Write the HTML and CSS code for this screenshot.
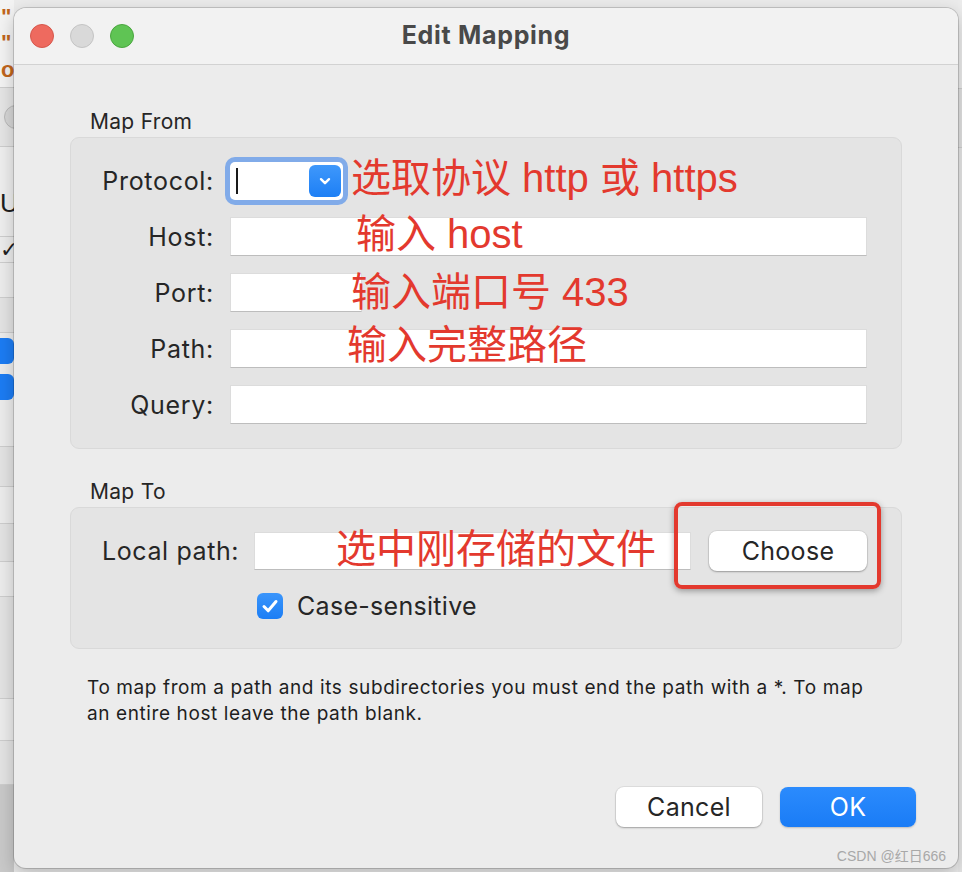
FILE: index.html
```html
<!DOCTYPE html>
<html lang="zh-CN">
<head>
<meta charset="utf-8">
<title>Edit Mapping</title>
<link rel="stylesheet" href="styles.css">
</head>
<body>
<div class="desktop">
  <div class="behind">
    <div class="b-row b-top">
      <span class="b-quote">"</span>
      <span class="b-quote">"</span>
      <span class="b-o">o</span>
    </div>
    <div class="b-row b-tool"><span class="b-circle"></span></div>
    <div class="b-row b-head"><span class="b-us">Us</span></div>
    <div class="b-row b-tick"><span class="b-check">✓</span></div>
    <div class="b-row b-h35"></div>
    <div class="b-row b-h35 alt"></div>
    <div class="b-row b-boxes"><span class="b-cb"></span><span class="b-cb"></span></div>
    <div class="b-row b-h40 alt"></div>
    <div class="b-row b-h37"></div>
    <div class="b-row b-h38 alt"></div>
    <div class="b-row b-h35"></div>
    <div class="b-row b-h102 alt"></div>
    <div class="b-row b-h42"></div>
    <div class="b-row b-h44 alt"></div>
    <div class="b-row b-bottom"></div>
  </div>

  <div class="window">
    <div class="titlebar">
      <div class="lights">
        <span class="light red"></span>
        <span class="light gray"></span>
        <span class="light green"></span>
      </div>
      <div class="title">Edit Mapping</div>
      <div class="spacer"></div>
    </div>

    <div class="content">
      <div class="section-label">Map From</div>
      <div class="group from">
        <div class="row">
          <label class="lbl">Protocol:</label>
          <div class="combo">
            <span class="caret"></span>
            <span class="combo-btn">
              <svg width="16" height="16" viewBox="0 0 16 16"><path d="M4 6.2l4 4 4-4" fill="none" stroke="#fff" stroke-width="2.4" stroke-linecap="round" stroke-linejoin="round"/></svg>
            </span>
          </div>
        </div>
        <div class="row">
          <label class="lbl">Host:</label>
          <div class="field"></div>
        </div>
        <div class="row">
          <label class="lbl">Port:</label>
          <div class="field port"></div>
        </div>
        <div class="row">
          <label class="lbl">Path:</label>
          <div class="field"></div>
        </div>
        <div class="row">
          <label class="lbl">Query:</label>
          <div class="field"></div>
        </div>
      </div>

      <div class="section-label to">Map To</div>
      <div class="group to">
        <div class="row local">
          <label class="lbl-left">Local path:</label>
          <div class="field"></div>
          <button class="btn choose">Choose</button>
        </div>
        <div class="check-row">
          <span class="checkbox">
            <svg width="26" height="26" viewBox="0 0 26 26"><path d="M7 13.5l4.2 4.3L19 8.5" fill="none" stroke="#fff" stroke-width="3" stroke-linecap="round" stroke-linejoin="round"/></svg>
          </span>
          <span class="check-label">Case-sensitive</span>
        </div>
      </div>

      <p class="help">To map from a path and its subdirectories you must end the path with a *. To map<br>an entire host leave the path blank.</p>

      <div class="actions">
        <button class="btn cancel">Cancel</button>
        <button class="btn ok">OK</button>
      </div>
    </div>

    <div class="ann ann1">选取协议 http 或 https</div>
    <div class="ann ann2">输入 host</div>
    <div class="ann ann3">输入端口号 433</div>
    <div class="ann ann4">输入完整路径</div>
    <div class="ann ann5">选中刚存储的文件</div>
    <div class="redbox"></div>
    <div class="watermark">CSDN @红日666</div>
  </div>

  <div class="behind-right"></div>
</div>
</body>
</html>
```

FILE: styles.css
```css
* { box-sizing: border-box; }
html, body { margin: 0; padding: 0; }
body {
  width: 962px;
  height: 872px;
  overflow: hidden;
  background: #ebebeb;
  font-family: Inter, "Liberation Sans", "Noto Sans CJK SC", sans-serif;
  color: #262626;
}
.desktop { display: flex; height: 872px; }

/* app behind the dialog (mostly covered by the window) */
.behind {
  width: 14px;
  flex: none;
  display: flex;
  flex-direction: column;
  background: #ececec;
}
.b-row { flex: none; border-bottom: 1px solid #cdcdcd; background: #ececec; }
.b-row.alt { background: #e3e3e3; }
.b-top {
  height: 88px;
  background: #f3f3f3;
  display: flex;
  flex-direction: column;
  align-items: flex-start;
  padding-left: 1px;
  font-family: "Liberation Sans", sans-serif;
  font-weight: 700;
  color: #c0651c;
}
.b-quote { font-size: 22px; line-height: 26px; height: 26px; }
.b-quote:first-child { margin-top: 4px; }
.b-o { font-size: 22px; line-height: 24px; margin-top: 2px; }
.b-tool { height: 59px; background: #e5e5e5; display: flex; align-items: center; }
.b-circle { flex: none; width: 24px; height: 24px; margin-left: 4px; border-radius: 50%; background: #d6d6d6; border: 1px solid #b9b9b9; }
.b-head { height: 90px; display: flex; align-items: flex-end; padding-bottom: 20px; background: #eeeeee; }
.b-us { font-size: 26px; line-height: 26px; color: #1f1f1f; font-family: "Liberation Sans", sans-serif; white-space: nowrap; }
.b-tick { height: 26px; display: flex; align-items: center; }
.b-check { font-size: 22px; color: #222; font-family: "DejaVu Sans", sans-serif; }
.b-h35 { height: 35px; }
.b-boxes { height: 114px; display: flex; flex-direction: column; gap: 10px; padding-top: 5px; overflow: hidden; }
.b-cb { flex: none; width: 26px; height: 26px; margin-left: -12px; border-radius: 6px; background: #1c7cf3; }
.b-h40 { height: 40px; }
.b-h37 { height: 37px; }
.b-h38 { height: 38px; }
.b-h102 { height: 102px; }
.b-h42 { height: 42px; }
.b-h44 { height: 44px; }
.b-bottom { flex: 1; background: #c9c9c9; border-bottom: 0; }

.behind-right {
  flex: 1;
  background: linear-gradient(#ececec 0, #ececec 88px, #cfcfcf 88px, #cfcfcf 89px, #e2e2e2 89px, #e2e2e2 147px, #cfcfcf 147px, #cfcfcf 148px, #e7e7e7 148px);
}

/* dialog window */
.window {
  position: relative;
  z-index: 1;
  flex: none;
  width: 944px;
  height: 860px;
  margin-top: 8px;
  background: #ececec;
  border-radius: 12px;
  box-shadow: 0 0 0 1px rgba(0, 0, 0, 0.16), 0 6px 18px rgba(0, 0, 0, 0.22);
  display: flex;
  flex-direction: column;
}
.titlebar {
  height: 57px;
  flex: none;
  background: #f2f2f2;
  border-bottom: 1px solid #d2d2d2;
  border-radius: 12px 12px 0 0;
  display: grid;
  grid-template-columns: 1fr auto 1fr;
  align-items: center;
}
.lights { display: flex; gap: 16px; padding-left: 16px; }
.light { width: 24px; height: 24px; border-radius: 50%; }
.light.red { background: #ee6a5f; border: 1px solid #d6574c; }
.light.gray { background: #d9d9d9; border: 1px solid #c4c4c4; }
.light.green { background: #5fc454; border: 1px solid #4aa63f; }
.title {
  font-size: 25px;
  font-weight: 700;
  color: #494949;
  letter-spacing: 0.7px;
  padding-bottom: 2px;
}

.content {
  flex: 1;
  display: flex;
  flex-direction: column;
  padding: 44px 56px 0;
}
.section-label {
  font-size: 21px;
  line-height: 26px;
  letter-spacing: 0.3px;
  padding-left: 20px;
  margin-bottom: 2px;
  color: #262626;
}
.section-label.to { margin-top: 30px; }

.group {
  background: #e4e4e4;
  border: 1px solid #d9d9d9;
  border-radius: 9px;
}
.group.from {
  display: flex;
  flex-direction: column;
  gap: 17px;
  padding: 23px 34px 24px 0;
}
.row { display: flex; align-items: center; height: 39px; }
.lbl {
  flex: none;
  width: 159px;
  padding-right: 16px;
  text-align: right;
  font-size: 25px;
  letter-spacing: 0.7px;
  color: #262626;
}
.field {
  flex: 1;
  height: 39px;
  background: #fff;
  border: 1px solid #dcdcdc;
  border-bottom-color: #bdbdbd;
}
.field.port { flex: none; width: 132px; }

.combo {
  flex: none;
  width: 113px;
  height: 38px;
  background: #fff;
  border-radius: 5px;
  box-shadow: 0 0 0 5px #81abe9;
  display: flex;
  align-items: center;
  justify-content: space-between;
  padding: 3px 2px 3px 6px;
}
.caret { width: 2px; height: 26px; background: #1a1a1a; }
.combo-btn {
  width: 32px;
  height: 32px;
  border-radius: 6px;
  background: linear-gradient(#3f98fb, #1d7ff5);
  display: flex;
  align-items: center;
  justify-content: center;
}

.group.to {
  display: flex;
  flex-direction: column;
  gap: 22px;
  padding: 23px 34px 29px 31px;
}
.row.local { height: 40px; }
.row.local .field { height: 38px; }
.lbl-left {
  flex: none;
  width: 152px;
  font-size: 25px;
  letter-spacing: 0.6px;
  color: #262626;
}
.btn {
  flex: none;
  height: 40px;
  border: 0;
  border-radius: 8px;
  background: #fff;
  font-family: Inter, "Liberation Sans", sans-serif;
  font-size: 25px;
  letter-spacing: 0.3px;
  color: #262626;
  box-shadow: 0 0 0 1px rgba(0, 0, 0, 0.06), 0 1px 2px rgba(0, 0, 0, 0.28);
  padding: 0;
}
.btn.choose { width: 158px; margin-left: 18px; }
.check-row { display: flex; align-items: center; height: 26px; margin-left: 155px; gap: 14px; }
.checkbox {
  width: 26px;
  height: 26px;
  border-radius: 6px;
  background: linear-gradient(#3a95fb, #1c7ef5);
  display: flex;
}
.check-label { font-size: 25px; letter-spacing: 0.3px; color: #262626; }

.help {
  margin: 26px 0 0;
  padding-left: 17px;
  font-size: 19px;
  letter-spacing: 0.6px;
  line-height: 26px;
  color: #1e1e1e;
}
.actions {
  display: flex;
  justify-content: flex-end;
  gap: 18px;
  margin-top: 60px;
  margin-right: -14px;
}
.btn.cancel { width: 146px; }
.btn.ok {
  width: 136px;
  background: linear-gradient(#2b8bfd, #1a7cf6);
  color: #fff;
  box-shadow: 0 1px 2px rgba(0, 0, 0, 0.2);
}

/* annotations drawn over the screenshot */
.ann {
  position: absolute;
  font-family: "Liberation Sans", "Noto Sans CJK SC", sans-serif;
  font-size: 40px;
  line-height: 40px;
  color: #e3392e;
  white-space: nowrap;
}
.ann1 { left: 337px; top: 150px; }
.ann2 { left: 342px; top: 206px; }
.ann3 { left: 337px; top: 264px; }
.ann4 { left: 333px; top: 317px; }
.ann5 { left: 322px; top: 521px; }
.redbox {
  position: absolute;
  left: 660px;
  top: 494px;
  width: 207px;
  height: 87px;
  border: 4px solid #e3392e;
  border-radius: 8px;
  box-shadow: 0 2px 6px rgba(0, 0, 0, 0.35);
}
.watermark {
  position: absolute;
  right: 12px;
  bottom: 3px;
  font-family: "Liberation Sans", "Noto Sans CJK SC", sans-serif;
  font-size: 14px;
  line-height: 18px;
  color: #a8a8a8;
}
```
